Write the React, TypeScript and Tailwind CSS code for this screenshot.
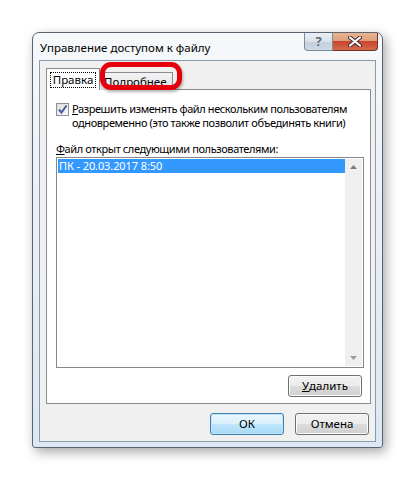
import React from "react";

const font = { fontFamily: '"Noto Sans", "Open Sans", sans-serif' };

const WinButton = ({
  children,
  isDefault = false,
}: {
  children: React.ReactNode;
  isDefault?: boolean;
}) => (
  <button
    className={
      "w-[74px] h-[22px] rounded-[3px] border text-[11.5px] text-black leading-none flex items-center justify-center " +
      (isDefault
        ? "border-[#3c7fb1] bg-[linear-gradient(#eaf6fd_0%,#d9f0fc_50%,#bee6fd_51%,#a7d9f5_100%)] shadow-[inset_0_0_0_1px_#c4e5f6]"
        : "border-[#707070] bg-[linear-gradient(#f2f2f2_0%,#ebebeb_50%,#dddddd_51%,#cfcfcf_100%)] shadow-[inset_0_0_0_1px_#fcfcfc]")
    }
  >
    {children}
  </button>
);

const Checkbox = () => (
  <div className="w-[13px] h-[13px] border border-[#8e8f8f] bg-[linear-gradient(135deg,#dcdcdc,#fbfbfb)] flex items-center justify-center shrink-0">
    <svg width="11" height="11" viewBox="0 0 11 11">
      <path d="M2 5.5 L4.5 8.5 L9.5 1.5" stroke="#4a5f97" strokeWidth="2" fill="none" />
    </svg>
  </div>
);

export default function App() {
  return (
    <div className="w-[418px] h-[483px] bg-white pt-[32px] pl-[32px]" style={font}>
      {/* window */}
      <div className="w-[351px] h-[416px] rounded-t-[7px] rounded-b-[3px] border border-[#5a6470] bg-[linear-gradient(#f6f8fb_0%,#eaf0f7_40%,#dbe7f4_100%)] shadow-[3px_4px_12px_rgba(0,0,0,0.35)] flex flex-col px-[6px] pb-[5px]">
        {/* title bar */}
        <div className="h-[27px] flex items-start justify-between shrink-0">
          <div className="pt-[7px] pl-[1px] text-[11.5px] text-black leading-[16px] whitespace-nowrap">
            Управление доступом к файлу
          </div>
          <div className="flex -mr-[2px]">
            <div className="w-[29px] h-[18px] rounded-bl-[4px] border border-t-0 border-[#7d8a98] bg-[linear-gradient(#e9eef4_0%,#d8e1ea_50%,#c3cfdc_51%,#cdd9e5_100%)] flex items-center justify-center">
              <span className="text-[13px] font-bold text-[#5c6670] leading-none" style={{ textShadow: "0 0 1px #fff" }}>
                ?
              </span>
            </div>
            <div className="w-[45px] h-[18px] rounded-br-[4px] border border-l-0 border-t-0 border-[#6b3526] bg-[linear-gradient(#e9b48f_0%,#dea07c_45%,#c9452f_50%,#d56a4a_100%)] flex items-center justify-center">
              <svg width="14" height="11" viewBox="0 0 14 11">
                <path d="M2 1.5 L12 9.5 M12 1.5 L2 9.5" stroke="#3a2a28" strokeWidth="4" strokeLinecap="round" />
                <path d="M2 1.5 L12 9.5 M12 1.5 L2 9.5" stroke="#ffffff" strokeWidth="2.2" strokeLinecap="round" />
              </svg>
            </div>
          </div>
        </div>

        {/* client area */}
        <div className="flex-1 border border-[#8c99a8] bg-[#f0f0f0] flex flex-col pl-[6px] pr-[6px] pt-[7px]">
          {/* tabs */}
          <div className="flex items-end h-[22px] relative z-10">
            <div className="w-[54px] h-[22px] border border-b-0 border-[#898c95] bg-white flex items-center justify-center">
              <div className="border border-dotted border-black px-[2px] h-[16px] flex items-center text-[11.5px] leading-none">
                Правка
              </div>
            </div>
            <div className="relative w-[73px] h-[18px] border border-l-0 border-b-0 border-[#898c95] bg-[linear-gradient(#f3f3f3,#e3e3e3)] flex items-center pl-[4px] text-[11.5px] leading-none">
              Подробнее
              <div className="absolute left-[0px] -top-[11px] w-[82px] h-[28px] rounded-[11px] border-[5px] border-[#e6000c] shadow-[1px_2px_3px_rgba(0,0,0,0.3)]" />
            </div>
          </div>

          {/* panel */}
          <div className="-mt-[1px] w-[325px] h-[315px] border border-[#898c95] bg-white flex flex-col pl-[9px] pr-[7px] pt-[12px]">
            <div className="flex items-start gap-[3px]">
              <div className="mt-[1px]">
                <Checkbox />
              </div>
              <div className="text-[11px] tracking-[-0.4px] leading-[14px] text-black whitespace-nowrap">
                <span className="underline">Р</span>азрешить изменять файл нескольким пользователям
                <br />
                одновременно (это также позволит объединять книги)
              </div>
            </div>

            <div className="mt-[12px] text-[11px] tracking-[-0.4px] leading-[14px] text-black whitespace-nowrap">
              <span className="underline">Ф</span>айл открыт следующими пользователями:
            </div>

            <div className="mt-[1px] w-[308px] h-[211px] border border-[#828790] bg-white flex p-[1px]">
              <div className="flex-1">
                <div className="h-[14px] bg-[#3399ff] text-white text-[11px] tracking-[-0.1px] leading-[14px] pl-[1px]">
                  ПК - 20.03.2017 8:50
                </div>
              </div>
              <div className="w-[17px] bg-[#efefef] flex flex-col justify-between items-center py-[6px]">
                <svg width="7" height="4" viewBox="0 0 7 4">
                  <path d="M0 4 L3.5 0 L7 4 Z" fill="#7a7a7a" />
                </svg>
                <svg width="7" height="4" viewBox="0 0 7 4">
                  <path d="M0 0 L3.5 4 L7 0 Z" fill="#9a9a9a" />
                </svg>
              </div>
            </div>

            <div className="mt-[7px] flex justify-end pr-[1px]">
              <WinButton>
                <span className="underline">У</span>далить
              </WinButton>
            </div>
          </div>

          {/* dialog buttons */}
          <div className="mt-[9px] flex justify-end gap-[11px]">
            <WinButton isDefault>ОК</WinButton>
            <WinButton>Отмена</WinButton>
          </div>
        </div>
      </div>
    </div>
  );
}
